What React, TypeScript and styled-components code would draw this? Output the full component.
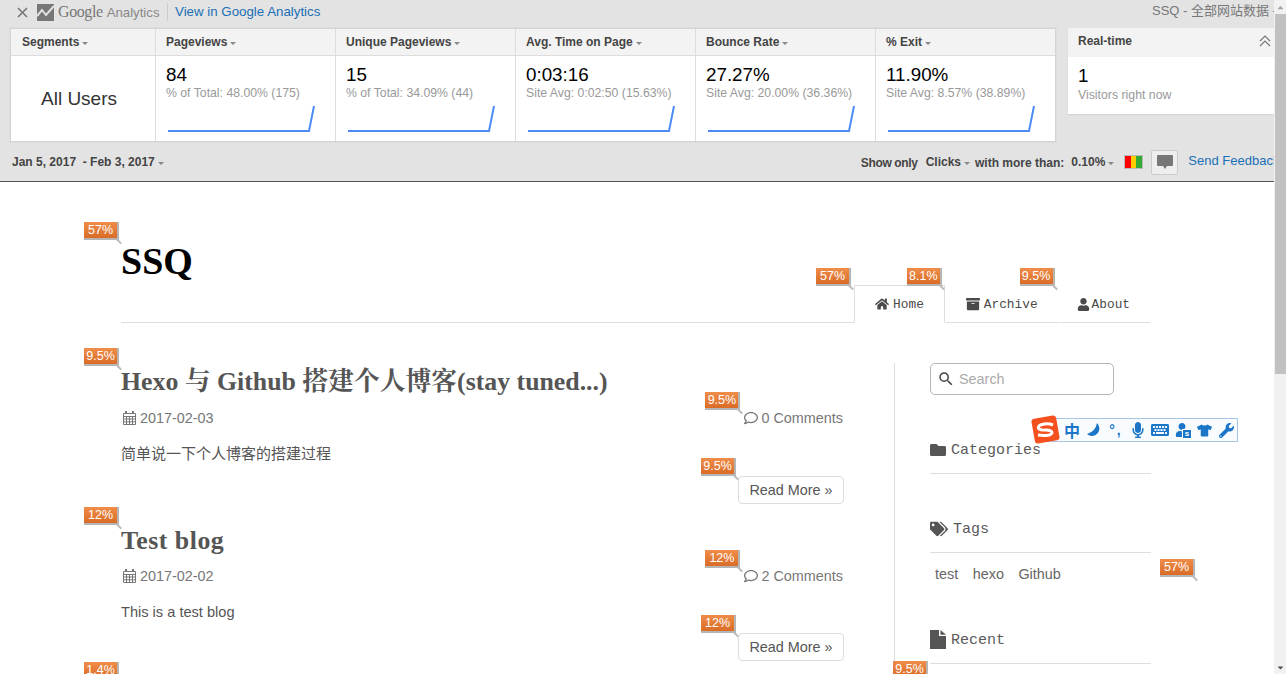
import * as React from "react";
import styled, { createGlobalStyle } from "styled-components";
import {
  FaHome,
  FaArchive,
  FaUser,
  FaFolder,
  FaTags,
  FaRegComment,
  FaMicrophone,
  FaKeyboard,
  FaTshirt,
  FaWrench,
  FaCaretDown,
  FaCaretUp,
} from "react-icons/fa";
import { MdSearch } from "react-icons/md";

const GlobalStyle = createGlobalStyle`
  html, body {
    margin: 0;
    padding: 0;
    height: 674px;
    overflow: hidden;
    background: #fff;
  }
  body {
    font-family: "Liberation Sans", "Noto Sans CJK SC", sans-serif;
  }
`;

const Frame = styled.div`
  display: flex;
  width: 1286px;
  height: 674px;
  overflow: hidden;
  position: relative;
`;

const Page = styled.div`
  flex: 1;
  min-width: 0;
  display: flex;
  flex-direction: column;
`;

const ScrollTrack = styled.div`
  width: 12px;
  background: #f1f1f1;
  display: flex;
  flex-direction: column;
  align-items: stretch;
`;

const ScrollArrow = styled.div<{ $dim?: boolean }>`
  height: 14px;
  display: flex;
  align-items: center;
  justify-content: center;
  color: ${(p) => (p.$dim ? "#a3a3a3" : "#505050")};
  font-size: 9px;
`;

const ScrollThumb = styled.div`
  height: 360px;
  margin-left: 1px;
  background: #c1c1c1;
`;

const ScrollRest = styled.div`
  flex: 1;
`;

/* ---- analytics bar ---- */

const GaBar = styled.div`
  background: #e3e3e3;
  border-bottom: 1px solid #555;
  height: 181px;
  overflow: hidden;
  color: #444;
`;

const GaTop = styled.div`
  display: flex;
  align-items: center;
  height: 24px;
  white-space: nowrap;
`;

const CloseX = styled.span`
  width: 12px;
  margin-left: 17px;
  display: flex;
`;

const GaLogo = styled.span`
  display: flex;
  margin-left: 8px;
  align-items: baseline;
  color: #777;
  width: 130px;
  border-right: 1px solid #ccc;
  height: 18px;
  line-height: 17px;
`;

const LogoMark = styled.svg`
  margin-right: 4px;
  align-self: center;
`;

const LogoGoogle = styled.span`
  font-family: "Liberation Serif", serif;
  font-size: 16px;
  letter-spacing: -0.4px;
`;

const LogoName = styled.span`
  font-size: 13.2px;
  margin-left: 4px;
  color: #888;
`;

const GaLink = styled.a`
  color: #1a6fb5;
  font-size: 13.3px;
  margin: 0 0 2px 7px;
`;

const GaProfile = styled.span`
  margin: 0 0 5px auto;
  font-size: 13px;
  color: #777;
  width: 122px;
  overflow: hidden;
`;

const GaRow = styled.div`
  display: flex;
  align-items: flex-start;
  margin: 4px 0 0 10px;
`;

const StatsTable = styled.div`
  display: flex;
  border: 1px solid #d4d4d4;
  box-shadow: 0 0 0 1px #ddd;
  background: #fff;
`;

const Col = styled.div<{ $width: number }>`
  width: ${(p) => p.$width}px;
  box-sizing: border-box;
  & + & {
    border-left: 1px solid #ddd;
  }
`;

const ColHead = styled.div<{ $inset?: number }>`
  height: 26px;
  background: #f3f3f3;
  border-bottom: 1px solid #ddd;
  padding-left: ${(p) => p.$inset ?? 10}px;
  font-size: 12px;
  font-weight: bold;
  line-height: 26px;
  color: #444;
  display: flex;
  align-items: center;
`;

const Caret = styled.span`
  display: inline-block;
  margin-left: 3px;
  margin-top: 2px;
  width: 0;
  height: 0;
  border-left: 3px solid transparent;
  border-right: 3px solid transparent;
  border-top: 3px solid #888;
`;

const SegmentCell = styled.div`
  height: 85px;
  display: flex;
  align-items: center;
  justify-content: center;
  font-size: 19px;
  color: #333;
  padding-right: 8px;
`;

const MetricCell = styled.div`
  height: 85px;
  padding: 8px 0 0 10px;
  box-sizing: border-box;
`;

const MetricValue = styled.div`
  font-size: 18.8px;
  line-height: 22px;
  color: #000;
`;

const MetricSub = styled.div`
  font-size: 12.25px;
  line-height: 15px;
  color: #999;
  white-space: nowrap;
`;

const Spark = styled.svg`
  display: block;
  margin: 4px 0 0 1px;
`;

const RealtimeCard = styled.div`
  margin-left: 12px;
  flex: 1;
  background: #fff;
  height: 86px;
  box-shadow: 0 1px 1px #d4d4d4;
`;

const RealtimeHead = styled.div`
  height: 29px;
  background: #f3f3f3;
  padding-left: 10px;
  font-size: 12px;
  font-weight: bold;
  line-height: 27px;
  position: relative;
`;

const Collapse = styled.svg`
  position: absolute;
  right: 3px;
  top: 7px;
`;

const RealtimeValue = styled.div`
  font-size: 18.8px;
  line-height: 21px;
  color: #000;
  padding: 8px 0 0 10px;
`;

const RealtimeSub = styled.div`
  font-size: 12.3px;
  line-height: 16px;
  color: #999;
  padding: 1px 0 0 10px;
`;

const GaControls = styled.div`
  display: flex;
  align-items: center;
  height: 40px;
  padding-left: 12px;
  font-size: 12px;
  font-weight: bold;
  white-space: nowrap;
  overflow: hidden;
`;

const ControlText = styled.span<{ $gap?: number; $drop?: boolean }>`
  flex-shrink: 0;
  margin-left: ${(p) => p.$gap ?? 0}px;
  padding-top: ${(p) => (p.$drop ? 2 : 0)}px;
  display: inline-flex;
  align-items: center;
`;

const ShowOnly = styled(ControlText)`
  letter-spacing: -0.35px;
`;

const HeatScale = styled.span`
  flex-shrink: 0;
  display: flex;
  width: 19px;
  height: 14px;
  margin-left: 10px;
  border: 1px solid #bbb;
  box-sizing: border-box;
  background: linear-gradient(
    to right,
    #f00 0 33%,
    #fc0 33% 66%,
    #3a3 66% 100%
  );
`;

const CommentButton = styled.span`
  flex-shrink: 0;
  width: 27px;
  height: 25px;
  margin-left: 8px;
  box-sizing: border-box;
  border: 1px solid #ccc;
  border-radius: 2px;
  background: #eee;
  display: flex;
  align-items: center;
  justify-content: center;
`;

const FeedbackLink = styled.a`
  flex-shrink: 0;
  margin: 0 0 3px 10px;
  font-size: 13px;
  font-weight: normal;
  color: #1a6fb5;
`;

/* ---- blog ---- */

const Blog = styled.div`
  flex: 1;
  min-height: 0;
  padding: 0 123px 0 121px;
  overflow: hidden;
  color: #555;
`;

const BlogHeader = styled.header`
  height: 141px;
  border-bottom: 1px solid #ddd;
  display: flex;
  justify-content: space-between;
  align-items: flex-end;
  box-sizing: border-box;
`;

const SiteTitle = styled.h1`
  margin: 0 0 39px;
  font-family: "Liberation Serif", serif;
  font-size: 38px;
  line-height: 44px;
  font-weight: bold;
  color: #000;
  position: relative;
`;

const Nav = styled.nav`
  display: flex;
  margin-bottom: -1px;
`;

const NavItem = styled.a<{ $active?: boolean }>`
  position: relative;
  display: flex;
  align-items: center;
  gap: 4px;
  height: 38px;
  box-sizing: border-box;
  padding: 0 20px;
  font-family: "Liberation Mono", "Noto Sans CJK SC", monospace;
  font-size: 12.8px;
  color: #4a4a4a;
  background: #fff;
  border: 1px solid ${(p) => (p.$active ? "#ddd" : "transparent")};
  border-bottom-color: ${(p) => (p.$active ? "#fff" : "#ddd")};
`;

const AboutIcon = styled(FaUser)`
  margin: 0 -2px 0 -3px;
`;

const Content = styled.div`
  display: flex;
  align-items: flex-start;
  margin-top: 40px;
`;

const Main = styled.main`
  width: 722px;
  padding-top: 1px;
  margin-right: 51px;
  flex-shrink: 0;
`;

const Post = styled.article`
  height: 159px;
`;

const PostTitle = styled.h2<{ $cjk?: boolean; $spacing?: number }>`
  position: relative;
  margin: 0;
  padding-bottom: ${(p) => (p.$cjk ? 1 : 0)}px;
  font-family: "Liberation Serif", "Noto Serif CJK SC", "Noto Sans CJK SC", serif;
  font-size: 25.8px;
  letter-spacing: ${(p) => p.$spacing ?? 0}px;
  line-height: 36px;
  font-weight: bold;
  color: #555;
`;

const PostMeta = styled.div`
  display: flex;
  justify-content: space-between;
  margin-top: 7px;
  font-size: 14.4px;
  line-height: 20px;
  color: #777;
`;

const MetaItem = styled.span`
  position: relative;
  display: flex;
  align-items: center;
  gap: 3px;
`;

const DateIcon = styled.svg`
  margin-left: 2px;
  margin-right: 1px;
`;

const PostBody = styled.p<{ $cjk?: boolean }>`
  margin: 16px 0 0;
  padding-bottom: ${(p) => (p.$cjk ? 1 : 0)}px;
  font-size: ${(p) => (p.$cjk ? 15 : 14.6)}px;
  line-height: 20px;
  color: #555;
`;

const PostActions = styled.div`
  display: flex;
  justify-content: flex-end;
  margin: 11px -1px 0 0;
`;

const ReadMore = styled.a`
  position: relative;
  display: block;
  width: 106px;
  height: 28px;
  box-sizing: border-box;
  border: 1px solid #ddd;
  border-radius: 4px;
  text-align: center;
  font-size: 14.4px;
  line-height: 26px;
  color: #555;
`;

const Side = styled.aside`
  flex: 1;
  border-left: 1px solid #ddd;
  padding: 0 0 0 35px;
  height: 340px;
`;

const SearchBox = styled.div`
  width: 184px;
  height: 32px;
  box-sizing: border-box;
  border: 1px solid #b5b5b5;
  border-radius: 5px;
  display: flex;
  align-items: center;
  gap: 4px;
  padding-left: 6px;
  font-size: 14.4px;
  color: #aaa;
`;

const Widget = styled.section<{ $top: number }>`
  margin-top: ${(p) => p.$top}px;
  position: relative;
`;

const WidgetTitle = styled.h3`
  margin: 0;
  height: 33px;
  border-bottom: 1px solid #ddd;
  display: flex;
  gap: 5px;
  align-items: flex-start;
  font-family: "Liberation Mono", "Noto Sans CJK SC", monospace;
  font-size: 15px;
  line-height: 21px;
  font-weight: normal;
  color: #5a5a5a;
`;

const WidgetIcon = styled.span`
  display: flex;
  align-items: center;
  height: 19px;
  color: #555;
`;

const TagList = styled.div`
  display: flex;
  gap: 14.5px;
  padding: 11px 0 0 5px;
  font-size: 14.4px;
  line-height: 20px;
  color: #666;
`;

/* ---- heatmap percentage tags ---- */

const PctTag = styled.span<{ $x?: number; $y?: number }>`
  position: absolute;
  left: ${(p) => p.$x ?? -38}px;
  top: ${(p) => p.$y ?? -19}px;
  width: 33px;
  height: 16px;
  z-index: 5;
  background: linear-gradient(#f08d4a, #d96c26);
  box-shadow: 1px 1px 0 1px #b5b5b5;
  color: #fff;
  font-family: "Liberation Sans", sans-serif;
  font-size: 12.5px;
  font-weight: normal;
  letter-spacing: 0;
  line-height: 16px;
  text-align: center;

  &::after {
    content: "";
    position: absolute;
    left: 33px;
    top: 16px;
    width: 7px;
    height: 2px;
    background: #bbb;
    transform: rotate(45deg);
    transform-origin: 0 0;
  }
`;

/* ---- sogou ime ---- */

const ImeBar = styled.div`
  position: absolute;
  left: 1045px;
  top: 418px;
  width: 193px;
  height: 24px;
  box-sizing: border-box;
  z-index: 6;
  background: #f9fcff;
  border: 1px solid #a9c5e4;
  display: flex;
  align-items: center;
  padding-left: 15px;
  color: #1c76c8;
`;

const ImeLogo = styled.svg`
  position: absolute;
  left: -15px;
  top: -4px;
`;

const ImeCell = styled.span`
  position: relative;
  width: 22px;
  display: flex;
  align-items: center;
  justify-content: center;
`;

const ImeGlyph = styled.span`
  font: bold 16px/20px "Noto Sans CJK SC", sans-serif;
`;

const ImePunct = styled.span`
  font: bold 14px/14px "Liberation Sans", sans-serif;
  letter-spacing: 2px;
`;

const ImeBadge = styled.span`
  position: absolute;
  right: 1px;
  bottom: -2px;
  width: 8px;
  height: 8px;
  background: #1c76c8;
  border: 1px solid #fff;
  color: #fff;
  font: bold 8px/8px "Liberation Sans", sans-serif;
  text-align: center;
`;

type Metric = { label: string; value: string; sub: string };

const metrics: Metric[] = [
  { label: "Pageviews", value: "84", sub: "% of Total: 48.00% (175)" },
  { label: "Unique Pageviews", value: "15", sub: "% of Total: 34.09% (44)" },
  { label: "Avg. Time on Page", value: "0:03:16", sub: "Site Avg: 0:02:50 (15.63%)" },
  { label: "Bounce Rate", value: "27.27%", sub: "Site Avg: 20.00% (36.36%)" },
  { label: "% Exit", value: "11.90%", sub: "Site Avg: 8.57% (38.89%)" },
];

const Sparkline = () => (
  <Spark width="150" height="28" viewBox="0 0 150 28">
    <path d="M1 26 H142 L147 1" fill="none" stroke="#4d8cf5" strokeWidth="2" />
  </Spark>
);

const GaHeader = () => (
  <GaBar>
    <GaTop>
      <CloseX>
        <svg width="11" height="11" viewBox="0 0 11 11">
          <path d="M1 1 L10 10 M10 1 L1 10" stroke="#777" strokeWidth="1.6" />
        </svg>
      </CloseX>
      <GaLogo>
        <LogoMark width="17" height="17" viewBox="0 0 17 17">
          <rect width="17" height="17" fill="#777" />
          <path d="M0 12 L5 6 L9 11 L17 2" fill="none" stroke="#e3e3e3" strokeWidth="2" />
        </LogoMark>
        <LogoGoogle>Google</LogoGoogle>
        <LogoName>Analytics</LogoName>
      </GaLogo>
      <GaLink>View in Google Analytics</GaLink>
      <GaProfile>SSQ - 全部网站数据 -</GaProfile>
    </GaTop>
    <GaRow>
      <StatsTable>
        <Col $width={144}>
          <ColHead $inset={11}>
            Segments
            <Caret />
          </ColHead>
          <SegmentCell>All Users</SegmentCell>
        </Col>
        {metrics.map((m) => (
          <Col $width={180} key={m.label}>
            <ColHead>
              {m.label}
              <Caret />
            </ColHead>
            <MetricCell>
              <MetricValue>{m.value}</MetricValue>
              <MetricSub>{m.sub}</MetricSub>
              <Sparkline />
            </MetricCell>
          </Col>
        ))}
      </StatsTable>
      <RealtimeCard>
        <RealtimeHead>
          Real-time
          <Collapse width="12" height="12" viewBox="0 0 12 12">
            <path d="M1 6 L6 1 L11 6 M1 11 L6 6 L11 11" fill="none" stroke="#777" strokeWidth="1.2" />
          </Collapse>
        </RealtimeHead>
        <RealtimeValue>1</RealtimeValue>
        <RealtimeSub>Visitors right now</RealtimeSub>
      </RealtimeCard>
    </GaRow>
    <GaControls>
      <ControlText>
        Jan 5, 2017 &nbsp;- Feb 3, 2017
        <Caret />
      </ControlText>
      <ShowOnly $gap={697} $drop>
        Show only
      </ShowOnly>
      <ControlText $gap={8}>
        Clicks
        <Caret />
      </ControlText>
      <ControlText $gap={5} $drop>
        with more than:
      </ControlText>
      <ControlText $gap={7}>
        0.10%
        <Caret />
      </ControlText>
      <HeatScale />
      <CommentButton>
        <svg width="16" height="15" viewBox="0 0 16 15">
          <path d="M1 0 H15 Q16 0 16 1 V10 Q16 11 15 11 H10 L8 14 L6 11 H1 Q0 11 0 10 V1 Q0 0 1 0 Z" fill="#777" />
        </svg>
      </CommentButton>
      <FeedbackLink>Send Feedback</FeedbackLink>
    </GaControls>
  </GaBar>
);

const CalendarIcon = () => (
  <DateIcon width="13" height="14" viewBox="0 0 13 14">
    <path
      d="M0.5 2.5 H12.5 V13.5 H0.5 Z M0.5 5.5 H12.5 M0.5 8 H12.5 M0.5 10.8 H12.5 M3.5 5.5 V13.5 M6.5 5.5 V13.5 M9.5 5.5 V13.5"
      fill="none"
      stroke="#777"
    />
    <path d="M3 0 V3 M10 0 V3" stroke="#777" strokeWidth="2" />
  </DateIcon>
);

type PostData = {
  title: string;
  date: string;
  comments: string;
  body: string;
  tag: string;
  cjk?: boolean;
  spacing?: number;
};

const posts: PostData[] = [
  {
    title: "Hexo 与 Github 搭建个人博客(stay tuned...)",
    date: "2017-02-03",
    comments: "0 Comments",
    body: "简单说一下个人博客的搭建过程",
    tag: "9.5%",
    cjk: true,
  },
  {
    title: "Test blog",
    date: "2017-02-02",
    comments: "2 Comments",
    body: "This is a test blog",
    tag: "12%",
    spacing: 0.5,
  },
];

const BlogPost = ({ post }: { post: PostData }) => (
  <Post>
    <PostTitle $cjk={post.cjk} $spacing={post.spacing}>
      <PctTag $x={-37} $y={-16}>
        {post.tag}
      </PctTag>
      {post.title}
    </PostTitle>
    <PostMeta>
      <MetaItem>
        <CalendarIcon />
        {post.date}
      </MetaItem>
      <MetaItem>
        <PctTag $x={-39} $y={-16}>
          {post.tag}
        </PctTag>
        <FaRegComment size={14} />
        {post.comments}
      </MetaItem>
    </PostMeta>
    <PostBody $cjk={post.cjk}>{post.body}</PostBody>
    <PostActions>
      <ReadMore>
        <PctTag>{post.tag}</PctTag>
        Read More »
      </ReadMore>
    </PostActions>
  </Post>
);

export default function App() {
  return (
    <Frame>
      <GlobalStyle />
      <Page>
        <GaHeader />
        <Blog>
          <BlogHeader>
            <SiteTitle>
              <PctTag $x={-37} $y={-17}>
                57%
              </PctTag>
              SSQ
            </SiteTitle>
            <Nav>
              <NavItem $active>
                <PctTag $x={-39} $y={-18}>
                  57%
                </PctTag>
                <FaHome size={14} />
                Home
              </NavItem>
              <NavItem>
                <PctTag $x={-39} $y={-18}>
                  8.1%
                </PctTag>
                <FaArchive size={14} />
                Archive
              </NavItem>
              <NavItem>
                <PctTag $x={-40} $y={-18}>
                  9.5%
                </PctTag>
                <AboutIcon size={13} />
                About
              </NavItem>
            </Nav>
          </BlogHeader>
          <Content>
            <Main>
              {posts.map((p) => (
                <BlogPost post={p} key={p.title} />
              ))}
              <PostTitle>
                <PctTag $x={-37} $y={-20}>
                  1.4%
                </PctTag>
              </PostTitle>
            </Main>
            <Side>
              <SearchBox>
                <MdSearch size={18} color="#444" />
                Search
              </SearchBox>
              <Widget $top={45}>
                <WidgetTitle>
                  <WidgetIcon>
                    <FaFolder size={16} />
                  </WidgetIcon>
                  Categories
                </WidgetTitle>
              </Widget>
              <Widget $top={45}>
                <WidgetTitle>
                  <WidgetIcon>
                    <FaTags size={18} />
                  </WidgetIcon>
                  Tags
                </WidgetTitle>
                <TagList>
                  <span>test</span>
                  <span>hexo</span>
                  <span>Github</span>
                </TagList>
                <PctTag $x={230} $y={40}>
                  57%
                </PctTag>
              </Widget>
              <Widget $top={46}>
                <WidgetTitle>
                  <WidgetIcon>
                    <svg width="16" height="19" viewBox="0 0 16 19">
                      <path d="M0 0 H9 V6 H16 V19 H0 Z M10.5 0 L16 4.8 H10.5 Z" fill="#555" />
                    </svg>
                  </WidgetIcon>
                  Recent
                </WidgetTitle>
                <PctTag $x={-37} $y={31}>
                  9.5%
                </PctTag>
              </Widget>
            </Side>
          </Content>
        </Blog>
      </Page>
      <ScrollTrack>
        <ScrollArrow $dim>
          <FaCaretUp />
        </ScrollArrow>
        <ScrollThumb />
        <ScrollRest />
        <ScrollArrow>
          <FaCaretDown />
        </ScrollArrow>
      </ScrollTrack>
      <ImeBar>
        <ImeLogo width="29" height="29" viewBox="0 0 29 29">
          <rect x="2" y="2" width="25" height="25" rx="3" fill="#f4511e" transform="rotate(-10 14.5 14.5)" />
          <path
            d="M22 10 Q17 8 11 9.5 Q6 11 8 14 Q10 15.5 15 15 Q21 15 21 18 Q19 21 13 20.5 L7 20"
            fill="none"
            stroke="#fff"
            strokeWidth="3"
          />
        </ImeLogo>
        <ImeCell>
          <ImeGlyph>中</ImeGlyph>
        </ImeCell>
        <ImeCell>
          <svg width="14" height="14" viewBox="0 0 14 14">
            <path d="M10 0 A7 7 0 1 1 0 11 A14 14 0 0 0 10 0 Z" fill="#1c76c8" />
          </svg>
        </ImeCell>
        <ImeCell>
          <ImePunct>°,</ImePunct>
        </ImeCell>
        <ImeCell>
          <FaMicrophone size={16} />
        </ImeCell>
        <ImeCell>
          <FaKeyboard size={18} />
        </ImeCell>
        <ImeCell>
          <FaUser size={14} />
          <ImeBadge>s</ImeBadge>
        </ImeCell>
        <ImeCell>
          <FaTshirt size={15} />
        </ImeCell>
        <ImeCell>
          <FaWrench size={15} />
        </ImeCell>
      </ImeBar>
    </Frame>
  );
}
